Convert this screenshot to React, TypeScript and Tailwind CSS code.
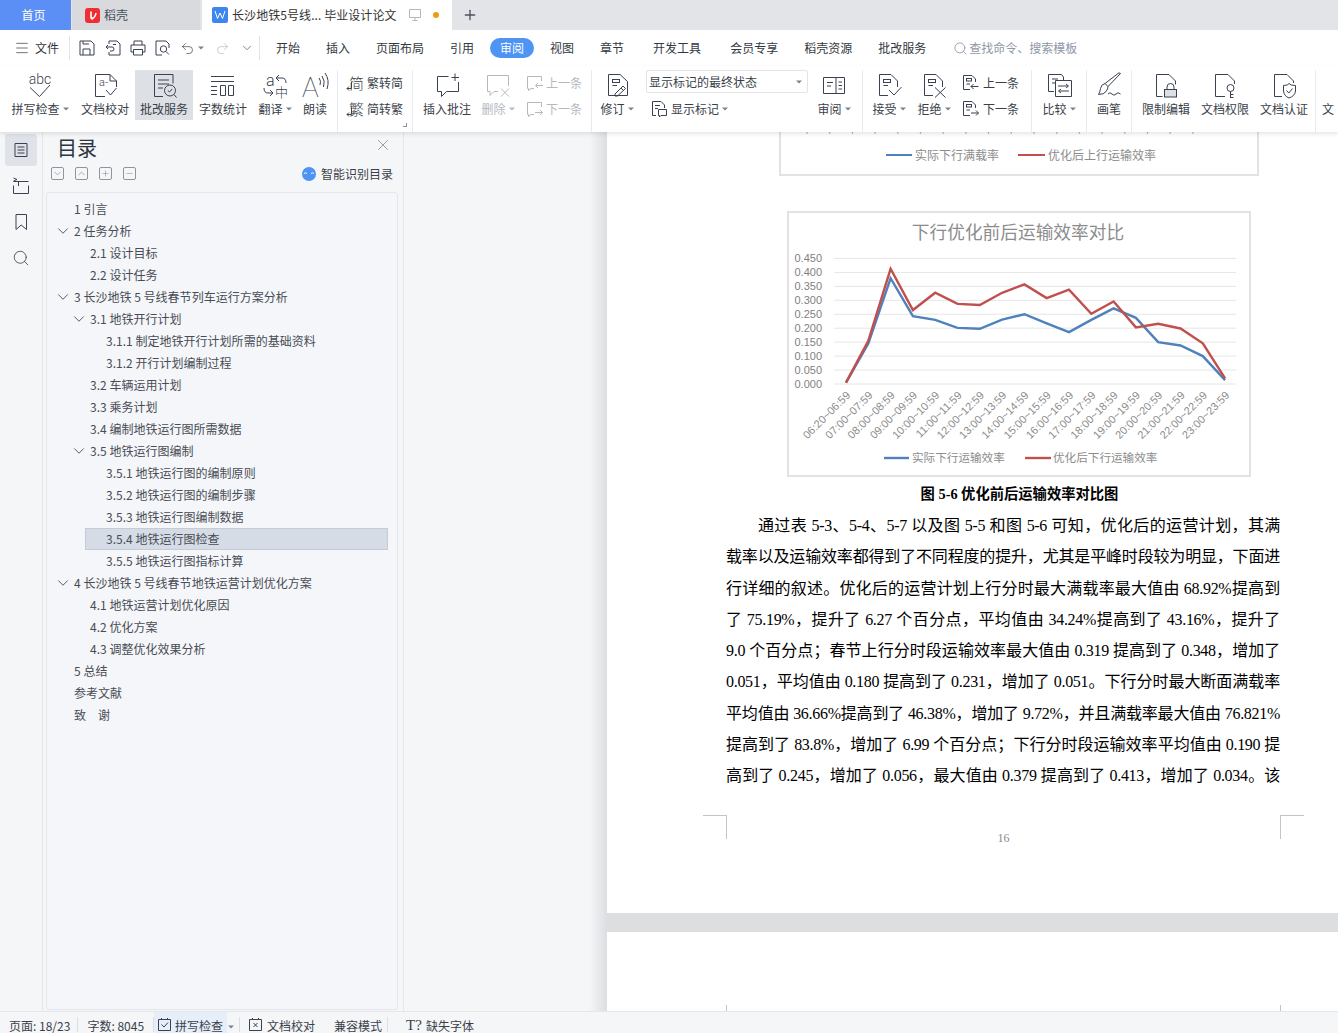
import type { ReactNode } from 'react';
import { ChevronDown, ChevronUp, Menu, Minus, Plus, Redo2, Search, Undo2, X } from 'lucide-react';

const INK = '#3a4150';
const GREY = '#b4b8bf';

function Glyph({ size = 28, color = INK, children }: { size?: number; color?: string; children: ReactNode }) {
  return (
    <svg width={size} height={size} viewBox={`0 0 ${size} ${size}`} fill="none" stroke={color} strokeWidth="1" className="shrink-0 overflow-visible">
      {children}
    </svg>
  );
}

const svgText = { fontFamily: 'Roboto, Noto Sans CJK SC, sans-serif', stroke: 'none', fill: INK };

const docTag = (
  <>
    <rect x="9.5" y="7.5" width="7" height="3" />
    <path d="M9.5 13.5H14" />
  </>
);

const bigIcons: Record<string, ReactNode> = {
  spell: (
    <>
      <text x="14" y="12" textAnchor="middle" fontSize="14" fontWeight="300" style={svgText}>abc</text>
      <path d="M4 15.5L13.5 24.5L24 13" />
    </>
  ),
  proof: (
    <>
      <path d="M14 24.5H4.5V2.5H19L25.5 9V15M19 2.5V9H25.5" />
      <text x="8" y="14" fontSize="11" fontWeight="300" style={svgText}>a-</text>
      <path d="M15 18L19.5 23L25.5 16" />
    </>
  ),
  review: (
    <>
      <path d="M13 24.5H4.5V2.5H23V11.5M8 8H19M8 12H19M8 16H13" />
      <circle cx="20" cy="18.5" r="5.5" />
      <path d="M24 22.5L26.5 25.5M17.8 18.5L19.5 20L22.2 17" />
    </>
  ),
  count: (
    <path d="M2 4.5H25M2 9.5H25M2 14.5H8M2 18.5H8M2 22.5H8M11.5 13.5H16.5V23.5H11.5ZM19.5 13.5H24.5V23.5H19.5Z" />
  ),
  translate: (
    <>
      <text x="5" y="14" fontSize="16" fontWeight="300" style={svgText}>a</text>
      <text x="14" y="25" fontSize="13" fontWeight="300" style={svgText}>中</text>
      <path d="M18 3L15 6L18 9M15 6H21Q25 6 25 11M3 16Q3 21 7 21H12M9 18L12 21L9 24" />
    </>
  ),
  read: (
    <>
      <text x="1" y="25" fontSize="28" fontWeight="100" style={svgText}>A</text>
      <path d="M18 6Q20.5 9 19 13M21 4Q24.5 9 22.5 15M24 1Q29 8 26 17" />
    </>
  ),
  comment: (
    <>
      <path d="M15.5 4.5H4.5V19.5H8.5V24.5L13.5 19.5H25.5V10" />
      <path d="M22 1.5V9M18.5 5.5H26" />
    </>
  ),
  remove: (
    <path d="M3.5 3.5H24.5V14M14 19.5H10L6 23.5V19.5H3.5V3.5M17 16.5L25 24.5M25 16.5L17 24.5" />
  ),
  revise: (
    <>
      <path d="M5.5 2.5H17L24.5 9.5V23.5H5.5Z" />
      {docTag}
      <path d="M12 22L20 14L22.5 16.5L14.5 24H12ZM18 16L20.5 18.5" />
    </>
  ),
  panel: <path d="M3.5 5.5H24.5V21.5H3.5ZM16 5.5V21.5M7 10.5H13M7 14H11M18.5 10H22M18.5 13.5H22M18.5 17H22" />,
  accept: (
    <>
      <path d="M13 23.5H4.5V2.5H16L22.5 9V15" />
      <rect x="8.5" y="7.5" width="7" height="3" />
      <path d="M8.5 13.5H13M14 18L19 23L26.5 15" />
    </>
  ),
  reject: (
    <>
      <path d="M13 23.5H4.5V2.5H16L22.5 9V15" />
      <rect x="8.5" y="7.5" width="7" height="3" />
      <path d="M8.5 13.5H13M15 15.5L25.5 25.5M25.5 15.5L15 25.5" />
    </>
  ),
  compare: (
    <path d="M3.5 2.5H16.5L18.5 5V8M3.5 2.5V19.5H9M7 7H13M7 11H11M10.5 8.5H26.5V24.5H10.5ZM13 14H23M21 12L23.5 14L21 16M24 19H14M16 17L13.5 19L16 21" />
  ),
  brush: (
    <>
      <path d="M25.5 1.5L13 14.5L10 11.5L24 0.8ZM10 11.5Q6 12.5 5.5 16.5Q5 20 3.5 22.5Q9 22.5 11 19.5Q13 17 13 14.5" />
      <path d="M13 22Q15 19.5 17 22T21 22T25.5 22" />
    </>
  ),
  lock: (
    <>
      <path d="M10.5 24.5H4.5V2.5H17L23.5 9V12.5" />
      <rect x="12.5" y="17.5" width="12" height="7.5" fill="#dcdfe4" />
      <path d="M15 17.5V15Q15 11.5 18.5 11.5T22 15V17.5" />
    </>
  ),
  key: (
    <>
      <path d="M14 24.5H4.5V2.5H17L23.5 9V12" />
      <circle cx="19.5" cy="16" r="3.5" />
      <path d="M19.5 19.5V26M19.5 22.5H22.5M19.5 25.5H22.5" />
    </>
  ),
  shield: (
    <>
      <path d="M12 24.5H4.5V2.5H17L23.5 9V11" />
      <path d="M13.5 13.5Q18 13.5 19 11.5Q20 13.5 25.5 13.5V19Q25 24 19 26Q14 24 13.5 19Z" />
      <path d="M16.5 18.5L18.8 21L22.5 16.5" />
    </>
  ),
};

function Caret({ color = '#7b8290' }: { color?: string }) {
  return (
    <svg width="6" height="4" viewBox="0 0 6 4" className="shrink-0" fill={color}>
      <path d="M0 0.5H6L3 3.5Z" />
    </svg>
  );
}

function BigButton({ w, icon, label, caret, active, disabled }: { w: string; icon: string; label: string; caret?: boolean; active?: boolean; disabled?: boolean }) {
  return (
    <div className={`${w} h-[50px] shrink-0 flex flex-col items-center pt-[2px] ${active ? 'bg-[#dde0e5]' : ''}`}>
      <Glyph color={disabled ? GREY : INK}>{bigIcons[icon]}</Glyph>
      <div className={`h-[18px] flex items-center gap-[3px] whitespace-nowrap leading-[18px] ${disabled ? 'text-[#b4b8bf]' : ''}`}>
        {label}
        {caret && <Caret color={disabled ? GREY : '#7b8290'} />}
      </div>
    </div>
  );
}

function Sep() {
  return <div className="w-px self-stretch bg-[#e9eaed] shrink-0" />;
}

function SmallItem({ icon, label, disabled, gap = 'gap-[4px]' }: { icon: ReactNode; label: string; disabled?: boolean; gap?: string }) {
  return (
    <div className={`h-[26px] flex items-center whitespace-nowrap ${gap} ${disabled ? 'text-[#b4b8bf]' : ''}`}>
      {icon}
      {label}
    </div>
  );
}

const BubbleUp = ({ down, color = INK }: { down?: boolean; color?: string }) => (
  <Glyph size={18} color={color}>
    <path d="M1.5 2.5H15.5V7M8 14.5H5L2.5 16.5V14.5H1.5V2.5" />
    <path d={down ? 'M9 12.5H16.5M14 10L16.5 12.5L14 15' : 'M9.5 11.5H17M12 9L9.5 11.5L12 14'} />
  </Glyph>
);

const DocArrow = ({ down }: { down?: boolean }) => (
  <Glyph size={18}>
    <path d="M8 15.5H1.5V1.5H10L13.5 5V8" />
    <rect x="4.5" y="4.5" width="5" height="2.5" />
    <path d="M4.5 10H8" />
    <path d={down ? 'M9 13H16.5M14 10.5L16.5 13L14 15.5' : 'M9 12.5H16.5M11.5 10L9 12.5L11.5 15'} />
  </Glyph>
);

const CharArrow = ({ ch }: { ch: string }) => (
  <div className="relative w-[18px] h-[20px] shrink-0 flex items-center justify-end text-[15px] leading-[20px] font-light">
    {ch}
    <svg width="7" height="10" viewBox="0 0 7 10" fill="none" stroke={INK} className="absolute left-0 top-[8px]">
      <path d="M5.5 0.5V7.5H1M3 5.5L1 7.5L3 9.5" />
    </svg>
  </div>
);

function Ribbon() {
  return (
    <div className="relative z-10 h-[66px] flex pl-[6px] bg-white text-[12px] text-[#3a3f4a] pt-[4px] shadow-[0_2px_4px_rgba(0,0,0,0.1)] overflow-hidden">
      <BigButton w="w-[68px]" icon="spell" label="拼写检查" caret />
      <div className="w-px shrink-0" />
      <BigButton w="w-[60px]" icon="proof" label="文档校对" />
      <BigButton w="w-[58px]" icon="review" label="批改服务" active />
      <BigButton w="w-[60px]" icon="count" label="字数统计" />
      <BigButton w="w-[44px]" icon="translate" label="翻译" caret />
      <BigButton w="w-[36px]" icon="read" label="朗读" />
      <div className="w-[4px] shrink-0" />
      <Sep />
      <div className="relative w-[74px] shrink-0 pl-[8px]">
        <SmallItem icon={<CharArrow ch="简" />} label="繁转简" gap="gap-[3px]" />
        <SmallItem icon={<CharArrow ch="繁" />} label="简转繁" gap="gap-[3px]" />
        <div className="absolute right-[5px] top-[53px] w-[4px] h-[4px] border-r border-b border-[#8b909a]" />
      </div>
      <Sep />
      <BigButton w="w-[68px]" icon="comment" label="插入批注" />
      <BigButton w="w-[34px]" icon="remove" label="删除" caret disabled />
      <div className="w-[76px] shrink-0 pl-[11px]">
        <SmallItem icon={<BubbleUp color={GREY} />} label="上一条" disabled gap="gap-[2px]" />
        <SmallItem icon={<BubbleUp down color={GREY} />} label="下一条" disabled gap="gap-[2px]" />
      </div>
      <Sep />
      <BigButton w="w-[50px]" icon="revise" label="修订" caret />
      <div className="w-[170px] shrink-0 pl-[4px]">
        <div className="w-[162px] h-[23px] border border-[#e2e4e8] rounded-[2px] flex items-center justify-between pl-[2px] pr-[5px]">
          显示标记的最终状态
          <Caret />
        </div>
        <div className="h-[26px] flex items-center pl-[4px] mt-[3px] gap-[3px]">
          <Glyph size={18}>
            <path d="M6 15.5H2.5V1.5H11L14.5 5V8M5 5.5H10M5 8.5H8" />
            <path d="M8.5 9.5H16.5V15.5H11L9.5 17V15.5H8.5Z" />
          </Glyph>
          显示标记
          <Caret />
        </div>
      </div>
      <BigButton w="w-[44px]" icon="panel" label="审阅" caret />
      <div className="w-[6px] shrink-0" />
      <Sep />
      <BigButton w="w-[52px]" icon="accept" label="接受" caret />
      <BigButton w="w-[38px]" icon="reject" label="拒绝" caret />
      <div className="w-[78px] shrink-0 pl-[9px]">
        <SmallItem icon={<DocArrow />} label="上一条" gap="gap-[3px]" />
        <SmallItem icon={<DocArrow down />} label="下一条" gap="gap-[3px]" />
      </div>
      <Sep />
      <BigButton w="w-[54px]" icon="compare" label="比较" caret />
      <Sep />
      <BigButton w="w-[44px]" icon="brush" label="画笔" />
      <Sep />
      <BigButton w="w-[68px]" icon="lock" label="限制编辑" />
      <BigButton w="w-[50px]" icon="key" label="文档权限" />
      <div className="w-[9px] shrink-0" />
      <BigButton w="w-[50px]" icon="shield" label="文档认证" />
      <div className="w-[6px] shrink-0" />
      <Sep />
      <div className="w-[6px] shrink-0" />
      <div className="w-[16px] shrink-0 pt-[30px] whitespace-nowrap leading-[18px]">文</div>
    </div>
  );
}

function TabBar() {
  return (
    <div className="h-[30px] flex bg-[#e3e4e8] text-[12px] text-[#333]">
      <div className="w-[71px] bg-[#5b8ff5] text-white flex items-center justify-center pr-[4px]">首页</div>
      <div className="w-px" />
      <div className="w-[128px] bg-[#d8dade] flex items-center pl-[13px] gap-[4px] text-[#4a4f59]">
        <div className="w-[15px] h-[15px] rounded-[3px] bg-[#ee2e33] flex items-center justify-center">
          <svg width="11" height="11" viewBox="0 0 11 11" fill="none" stroke="white" strokeWidth="1.6">
            <path d="M4 1.5V8Q5 9 6 7.5M9 3Q8.5 7 4.5 9.5" />
          </svg>
        </div>
        稻壳
      </div>
      <div className="w-[2px]" />
      <div className="w-[250px] bg-white flex items-center pl-[10px]">
        <div className="w-[16px] h-[16px] rounded-[2px] bg-[#3c86ee] flex items-center justify-center">
          <svg width="12" height="10" viewBox="0 0 12 10" fill="none" stroke="white" strokeWidth="1">
            <path d="M1 1L3.5 8.5L6 3L8.5 8.5L11 1" />
          </svg>
        </div>
        <span className="ml-[4px] whitespace-nowrap tracking-[0.07px]">长沙地铁5号线... 毕业设计论文</span>
        <svg width="14" height="14" viewBox="0 0 14 14" fill="none" stroke="#b3b7bf" className="ml-[11px]">
          <path d="M1.5 1.5H12.5V9.5H1.5ZM7 9.5V12.5M4.5 12.5H9.5" />
        </svg>
        <div className="w-[6px] h-[6px] rounded-full bg-[#ee9c12] ml-[11px]" />
      </div>
      <div className="ml-[10px] flex items-center">
        <Plus size={16} strokeWidth={2} color="#4a5160" />
      </div>
    </div>
  );
}

function MenuRow() {
  const tabs: [string, string][] = [
    ['开始', 'ml-[16px]'],
    ['插入', 'ml-[26px]'],
    ['页面布局', 'ml-[26px]'],
    ['引用', 'ml-[26px]'],
  ];
  const tail: [string, string][] = [
    ['视图', 'ml-[16px]'],
    ['章节', 'ml-[26px]'],
    ['开发工具', 'ml-[29px]'],
    ['会员专享', 'ml-[29px]'],
    ['稻壳资源', 'ml-[26px]'],
    ['批改服务', 'ml-[26px]'],
  ];
  return (
    <div className="h-[36px] flex items-center bg-white text-[12px] text-[#33383f]">
      <div className="ml-[14px] w-[16px]"><Menu size={16} strokeWidth={1.1} color={INK} /></div>
      <span className="ml-[5px]">文件</span>
      <div className="ml-[10px] w-px h-[24px] bg-[#e3e4e8]" />
      <div className="ml-[9px]">
        <Glyph size={16}><path d="M1 1H12L15 4V15H1ZM4 15V9H11V15M4 1V4H10" /></Glyph>
      </div>
      <div className="ml-[10px]">
        <Glyph size={16}><path d="M4 4V1H12L15 4V15H4V12M1 7H7Q9 7 9 9T7 11H5M1 7L3 5M1 7L3 9M8 4.5H11" /></Glyph>
      </div>
      <div className="ml-[9px]">
        <Glyph size={16}><path d="M4 5V1H12V5M3.5 12H1V5H15V12H12.5M3.5 9.5H12.5V15H3.5Z" /></Glyph>
      </div>
      <div className="ml-[9px]">
        <Glyph size={16}><path d="M7 15H1V1H11L14 4V8" /><circle cx="8.5" cy="9" r="3.2" /><path d="M11 11.5L14 14.5" /></Glyph>
      </div>
      <div className="ml-[9px]"><Undo2 size={15} strokeWidth={1.1} color={INK} /></div>
      <div className="ml-[3px]"><Caret /></div>
      <div className="ml-[11px]"><Redo2 size={15} strokeWidth={1.1} color={GREY} /></div>
      <div className="ml-[10px]"><ChevronDown size={14} strokeWidth={1.5} color="#6b7280" /></div>
      <div className="ml-[5px] w-px h-[24px] bg-[#e3e4e8]" />
      {tabs.map(([t, m]) => <span key={t} className={m}>{t}</span>)}
      <span className="ml-[16px] w-[44px] h-[20px] rounded-full bg-[#4d94f5] text-white flex items-center justify-center">审阅</span>
      {tail.map(([t, m]) => <span key={t} className={m}>{t}</span>)}
      <div className="ml-[27px]"><Search size={15} strokeWidth={1.2} color="#7f8897" /></div>
      <span className="ml-px text-[#8e97a6]">查找命令、搜索模板</span>
    </div>
  );
}

type TocItem = { t: string; lv: number; open?: boolean; sel?: boolean };

const toc: TocItem[] = [
  { t: '1 引言', lv: 0 },
  { t: '2 任务分析', lv: 0, open: true },
  { t: '2.1 设计目标', lv: 1 },
  { t: '2.2 设计任务', lv: 1 },
  { t: '3 长沙地铁 5 号线春节列车运行方案分析', lv: 0, open: true },
  { t: '3.1 地铁开行计划', lv: 1, open: true },
  { t: '3.1.1 制定地铁开行计划所需的基础资料', lv: 2 },
  { t: '3.1.2 开行计划编制过程', lv: 2 },
  { t: '3.2 车辆运用计划', lv: 1 },
  { t: '3.3 乘务计划', lv: 1 },
  { t: '3.4 编制地铁运行图所需数据', lv: 1 },
  { t: '3.5 地铁运行图编制', lv: 1, open: true },
  { t: '3.5.1 地铁运行图的编制原则', lv: 2 },
  { t: '3.5.2 地铁运行图的编制步骤', lv: 2 },
  { t: '3.5.3 地铁运行图编制数据', lv: 2 },
  { t: '3.5.4 地铁运行图检查', lv: 2, sel: true },
  { t: '3.5.5 地铁运行图指标计算', lv: 2 },
  { t: '4 长沙地铁 5 号线春节地铁运营计划优化方案', lv: 0, open: true },
  { t: '4.1 地铁运营计划优化原因', lv: 1 },
  { t: '4.2 优化方案', lv: 1 },
  { t: '4.3 调整优化效果分析', lv: 1 },
  { t: '5 总结', lv: 0 },
  { t: '参考文献', lv: 0 },
  { t: '致\u3000谢', lv: 0 },
];

function TocBtn({ children }: { children: ReactNode }) {
  return (
    <div className="w-[13px] h-[13px] border border-[#8f949d] rounded-[2px] flex items-center justify-center">{children}</div>
  );
}

function TocPanel() {
  return (
    <div className="w-[361px] shrink-0 flex flex-col border-l border-[#e4e6ea] pl-[3px] pr-[5px] pb-px">
      <div className="h-[60px] shrink-0 flex flex-col pl-[5px] pr-[5px]">
        <div className="flex items-center justify-between h-[29px] pt-[3px] pl-[6px]">
          <span className="text-[20px] leading-[28px] text-[#2f3540]">目录</span>
          <div className="mr-[1px] -mt-[6px]"><X size={18} strokeWidth={0.9} color="#6b7280" /></div>
        </div>
        <div className="flex items-center h-[25px] gap-[11px] text-[12px] text-[#3a3f4a]">
          <TocBtn><ChevronDown size={11} color="#6b7280" strokeWidth={1.2} /></TocBtn>
          <TocBtn><ChevronUp size={11} color="#6b7280" strokeWidth={1.2} /></TocBtn>
          <TocBtn><Plus size={9} color="#6b7280" strokeWidth={1.2} /></TocBtn>
          <TocBtn><Minus size={9} color="#6b7280" strokeWidth={1.2} /></TocBtn>
          <div className="ml-auto flex items-center gap-[5px]">
            <svg width="14" height="14" viewBox="0 0 14 14">
              <circle cx="7" cy="7" r="7" fill="#4d94f5" />
              <path d="M2 6.5Q3.5 5 5 6.5M9 6.5Q10.5 5 12 6.5" stroke="white" fill="none" />
            </svg>
            智能识别目录
          </div>
        </div>
      </div>
      <div className="flex-1 border border-[#e4e6ea] rounded-[3px] pt-[5px] pr-[9px] bg-[#f5f6f9] text-[12px] text-[#474c55] tracking-[0.02px]">
        {toc.map((i) => (
          <div key={i.t} className={`relative h-[22px] flex items-center whitespace-pre ${i.sel ? 'bg-[#d6dce5] border border-[#c6ccd6] ml-[38px]' : ''}`}>
            {i.open && (
              <span className={`${i.lv === 0 ? 'ml-[7px]' : 'ml-[23px]'} w-[18px] mr-[2px]`}>
                <ChevronDown size={18} strokeWidth={1.1} color="#333a45" />
              </span>
            )}
            <span className={i.open ? '' : i.sel ? 'ml-[20px]' : i.lv === 0 ? 'ml-[27px]' : i.lv === 1 ? 'ml-[43px]' : 'ml-[59px]'}>{i.t}</span>
          </div>
        ))}
      </div>
    </div>
  );
}

const blue = [0.005, 0.145, 0.379, 0.243, 0.23, 0.201, 0.198, 0.231, 0.25, 0.217, 0.186, 0.23, 0.271, 0.237, 0.15, 0.138, 0.1, 0.014];
const red = [0.005, 0.155, 0.413, 0.265, 0.327, 0.287, 0.283, 0.327, 0.357, 0.308, 0.338, 0.252, 0.296, 0.203, 0.216, 0.199, 0.146, 0.02];
const slots = ['06:20~06:59', '07:00~07:59', '08:00~08:59', '09:00~09:59', '10:00~10:59', '11:00~11:59', '12:00~12:59', '13:00~13:59', '14:00~14:59', '15:00~15:59', '16:00~16:59', '17:00~17:59', '18:00~18:59', '19:00~19:59', '20:00~20:59', '21:00~21:59', '22:00~22:59', '23:00~23:59'];
const px = (i: number) => 846 + i * 22.3;
const py = (v: number) => 384 - v * 279;
const line = (d: number[]) => d.map((v, i) => `${px(i)},${py(v)}`).join(' ');

function Chart() {
  const font = 'Liberation Sans, Noto Sans CJK SC, sans-serif';
  return (
    <div className="ml-[180px] mt-[35px] w-[464px] h-[266px] border-2 border-[#e2e2e2]">
      <svg width="460" height="262" viewBox="789 213 460 262" fontFamily={font}>
        <text x="1018" y="239" textAnchor="middle" fontSize="17.7" fill="#8c8c8c">下行优化前后运输效率对比</text>
        {Array.from({ length: 10 }, (_, k) => {
          const v = k * 0.05;
          return (
            <g key={k}>
              <line x1="834" x2="1236" y1={py(v)} y2={py(v)} stroke="#e6e6e6" />
              <text x="822" y={py(v) + 4} textAnchor="end" fontSize="11" fill="#7f7f7f">{v.toFixed(3)}</text>
            </g>
          );
        })}
        {slots.map((s, i) => (
          <text key={s} x={px(i) + 5} y="396" textAnchor="end" fontSize="11" fill="#8c8c8c" transform={`rotate(-45 ${px(i) + 5} 396)`}>{s}</text>
        ))}
        <polyline points={line(blue)} fill="none" stroke="#4f81bd" strokeWidth="2.4" />
        <polyline points={line(red)} fill="none" stroke="#c0504d" strokeWidth="2.4" />
        <line x1="884" x2="909" y1="458" y2="458" stroke="#4f81bd" strokeWidth="2.4" />
        <text x="912" y="462" fontSize="11.6" fill="#8c8c8c">实际下行运输效率</text>
        <line x1="1025" x2="1051" y1="458" y2="458" stroke="#c0504d" strokeWidth="2.4" />
        <text x="1053" y="462" fontSize="11.6" fill="#8c8c8c">优化后下行运输效率</text>
      </svg>
    </div>
  );
}

const lines = [
  '通过表 5-3、5-4、5-7 以及图 5-5 和图 5-6 可知，优化后的运营计划，其满',
  '载率以及运输效率都得到了不同程度的提升，尤其是平峰时段较为明显，下面进',
  '行详细的叙述。优化后的运营计划上行分时最大满载率最大值由 68.92%提高到',
  '了 75.19%，提升了 6.27 个百分点，平均值由 34.24%提高到了 43.16%，提升了',
  '9.0 个百分点；春节上行分时段运输效率最大值由 0.319 提高到了 0.348，增加了',
  '0.051，平均值由 0.180 提高到了 0.231，增加了 0.051。下行分时最大断面满载率',
  '平均值由 36.66%提高到了 46.38%，增加了 9.72%，并且满载率最大值由 76.821%',
  '提高到了 83.8%，增加了 6.99 个百分点；下行分时段运输效率平均值由 0.190 提',
  '高到了 0.245，增加了 0.056，最大值由 0.379 提高到了 0.413，增加了 0.034。该',
];

function DocPage() {
  const serif = "font-['Liberation_Serif','Noto_Sans_CJK_SC',serif]";
  return (
    <div className={`w-[731px] shrink-0 flex flex-col bg-[#dcdee0] ${serif}`}>
      <div className="h-[781px] shrink-0 bg-white overflow-hidden">
        <div className="ml-[172px] w-[480px] h-[44px] border-x-2 border-b-2 border-[#e2e2e2] flex flex-col font-['Noto_Sans_CJK_SC',sans-serif] text-[12px] text-[#8c8c8c]">
          <svg width="476" height="3" viewBox="0 0 476 3" className="shrink-0">
            {slots.map((s, i) => <circle key={s} cx={26 + i * 22.7} cy="1" r="0.8" fill="#9a9a9a" />)}
          </svg>
          <div className="flex-1 flex items-center pt-[1px]">
            <div className="ml-[105px] w-[26px] h-[2px] bg-[#4f81bd]" />
            <span className="ml-[3px] whitespace-nowrap">实际下行满载率</span>
            <div className="ml-[19px] w-[27px] h-[2px] bg-[#c0504d]" />
            <span className="ml-[3px] whitespace-nowrap">优化后上行运输效率</span>
          </div>
        </div>
        <Chart />
        <div className="mt-[7px] ml-[119px] w-[587px] h-[20px] text-center text-[14.3px] leading-[20px] font-bold text-black">图 5-6 优化前后运输效率对比图</div>
        <div className="mt-[6px] ml-[119px] w-[554px] text-[16px] leading-[31.25px] text-black tracking-[-0.3px]">
          {lines.map((l, i) => (
            <div key={l} className={`h-[31.25px] whitespace-nowrap [text-align:justify] [text-align-last:justify] ${i === 0 ? 'pl-[32px]' : ''}`}>{l}</div>
          ))}
        </div>
        <div className="mt-[24px] ml-[96px] w-[601px] flex">
          <div className="w-[24px] h-[24px] border-t border-r border-[#c4c4c4]" />
          <div className="w-[553px] text-center text-[12px] leading-[16px] pt-[15px] text-[#8a8a8a]">16</div>
          <div className="w-[24px] h-[24px] border-t border-l border-[#c4c4c4]" />
        </div>
      </div>
      <div className="h-[19px] shrink-0" />
      <div className="flex-1 bg-white flex items-end pl-[119px]">
        <div className="w-[555px] h-[6px] border-x border-[#c4c4c4]" />
      </div>
    </div>
  );
}

function StatusBar() {
  return (
    <div className="h-[22px] shrink-0 border-t border-[#e4e6ea] bg-[#f5f6f8] flex text-[12px] text-[#3a3f4a] overflow-hidden whitespace-nowrap">
      <span className="ml-[9px] pt-[4px] leading-[20px]">页面: 18/23</span>
      <div className="ml-[7px] mt-[5px] w-px h-[15px] bg-[#dcdee2]" />
      <span className="ml-[9px] pt-[4px] leading-[20px]">字数: 8045</span>
      <div className="ml-[9px] mt-[5px] w-px h-[15px] bg-[#dcdee2]" />
      <div className="w-[73px] bg-[#e6eefa] flex items-start pt-[5px] pl-[3px] gap-[3px] leading-[20px]">
        <Glyph size={15}><path d="M1.5 2.5H13.5V13.5H1.5ZM4.5 1V3M10.5 1V3M4.5 7.5L7 10L11 5.5" /></Glyph>
        <span className="-mt-px">拼写检查</span>
      </div>
      <div className="ml-[1px] mt-[13px]"><Caret /></div>
      <div className="ml-[5px] mt-[5px] w-px h-[15px] bg-[#dcdee2]" />
      <div className="ml-[8px] pt-[5px]"><Glyph size={15}><path d="M1.5 2.5H13.5V13.5H1.5ZM4.5 1V3M10.5 1V3M5.5 6L9.5 10M9.5 6L5.5 10" /></Glyph></div>
      <span className="ml-[4px] pt-[4px] leading-[20px]">文档校对</span>
      <span className="ml-[19px] pt-[4px] leading-[20px]">兼容模式</span>
      <div className="ml-[5px] mt-[5px] w-px h-[15px] bg-[#dcdee2]" />
      <span className="ml-[18px] pt-[2px] text-[15px] leading-[22px] font-['Liberation_Serif',serif]">T?</span>
      <span className="ml-[4px] pt-[4px] leading-[20px]">缺失字体</span>
    </div>
  );
}

export default function App() {
  return (
    <div className="w-[1338px] h-[1033px] overflow-hidden flex flex-col bg-[#f5f6f8] font-['Noto_Sans_CJK_SC',sans-serif]">
      <TabBar />
      <MenuRow />
      <Ribbon />
      <div className="flex-1 min-h-0 flex">
        <div className="w-[42px] shrink-0 flex flex-col items-center pt-[2px]">
          <div className="w-[32px] h-[32px] rounded-[3px] bg-[#dfe2e8] flex items-center justify-center">
            <Glyph size={16}><path d="M2 1.5H14V14.5H2ZM4.5 5H11.5M4.5 8H11.5M4.5 11H11.5" /></Glyph>
          </div>
          <div className="mt-[11px]"><Glyph size={18}><path d="M1.5 4.5H16.5M6.5 4.5V9M1.5 8.5V16.5H16.5V8.5M1.5 1L5 2.5L1.5 4" /></Glyph></div>
          <div className="mt-[18px]"><Glyph size={18}><path d="M4 1.5H14.5V16.5L9.2 12L4 16.5Z" /></Glyph></div>
          <div className="mt-[18px]"><Search size={18} strokeWidth={1.1} color={INK} /></div>
        </div>
        <TocPanel />
        <div className="w-[204px] shrink-0 border-l border-[#e4e6ea] flex justify-end">
          <div className="w-[18px] bg-linear-to-r from-[#f5f6f8] to-[#dcdee1]" />
        </div>
        <DocPage />
      </div>
      <StatusBar />
    </div>
  );
}
